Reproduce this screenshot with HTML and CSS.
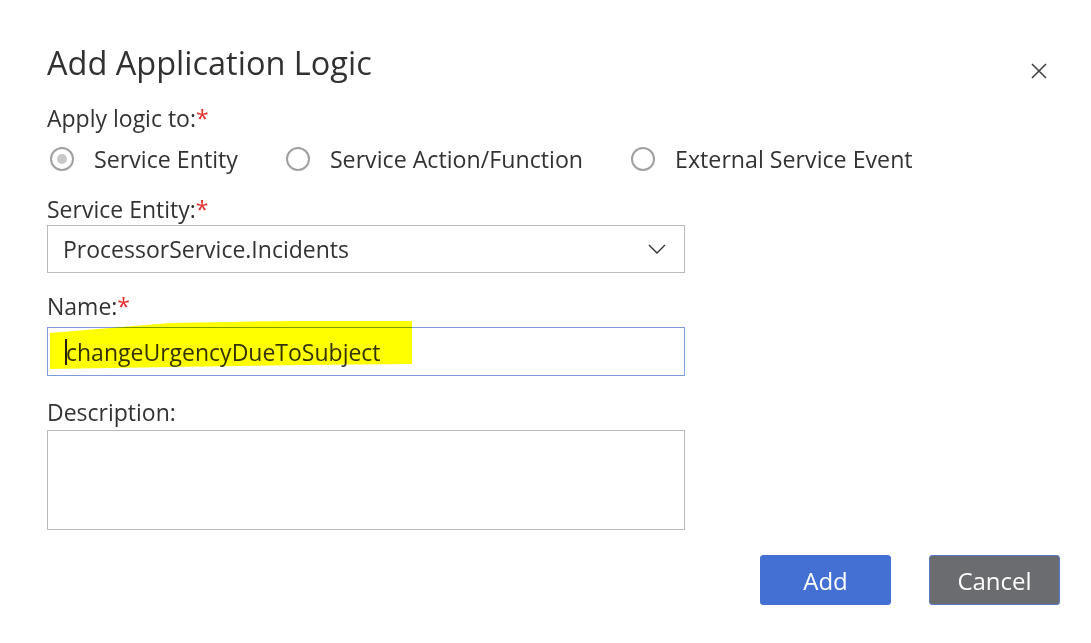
FILE: index.html
```html
<!DOCTYPE html>
<html>
<head>
<meta charset="utf-8">
<link rel="stylesheet" href="styles.css">
</head>
<body>
<div class="dialog">
  <div class="header">
    <h1 class="title">Add Application Logic</h1>
    <button class="close" aria-label="Close">
      <svg width="16" height="16" viewBox="0 0 16 16"><path d="M1 1 L15 15 M15 1 L1 15" stroke="#444" stroke-width="1.6" fill="none"/></svg>
    </button>
  </div>
  <div class="label l-apply">Apply logic to:<span class="req">*</span></div>
  <div class="radios">
    <label class="radio"><span class="circle checked"></span>Service Entity</label>
    <label class="radio"><span class="circle"></span>Service Action/Function</label>
    <label class="radio"><span class="circle"></span>External Service Event</label>
  </div>
  <div class="label l-entity">Service Entity:<span class="req">*</span></div>
  <div class="select">
    <span>ProcessorService.Incidents</span>
    <svg width="18" height="10" viewBox="0 0 18 10"><path d="M1 1 L9 9 L17 1" stroke="#333" stroke-width="1.4" fill="none"/></svg>
  </div>
  <div class="label l-name">Name:<span class="req">*</span></div>
  <div class="name-wrap">
    <div class="input name"><span class="caret"></span>changeUrgencyDueToSubject</div>
    <div class="highlight"></div>
  </div>
  <div class="label l-desc">Description:</div>
  <div class="textarea"></div>
  <div class="footer">
    <button class="btn add">Add</button>
    <button class="btn cancel">Cancel</button>
  </div>
</div>
</body>
</html>
```
FILE: styles.css
```css
html, body {
  margin: 0;
  padding: 0;
  background: #fff;
}
body {
  font-family: "Open Sans", "Noto Sans", sans-serif;
  color: #333;
}
.dialog {
  width: 1091px;
  height: 643px;
  padding: 39px 0 0 47px;
  box-sizing: border-box;
}
.header {
  display: flex;
  align-items: flex-start;
  width: 1001px;
}
.title {
  margin: 0;
  font-weight: 400;
  font-size: 32.5px;
  line-height: 48px;
  color: #323130;
  flex: 1;
}
.close {
  border: 0;
  background: none;
  padding: 0;
  margin-top: 23px;
  width: 18px;
  height: 18px;
  display: flex;
  align-items: center;
  justify-content: center;
}
.label {
  font-size: 23px;
  line-height: 28px;
  color: #333;
}
.req {
  color: #e52b2b;
}
.l-apply { margin-top: 17px; }
.radios {
  display: flex;
  gap: 48px;
  margin-top: 13px;
  padding-left: 3px;
}
.radio {
  display: flex;
  align-items: center;
  font-size: 23.2px;
  line-height: 28px;
  gap: 20px;
}
.circle {
  width: 24px;
  height: 24px;
  border: 2.5px solid #a0a0a0;
  border-radius: 50%;
  box-sizing: border-box;
  display: flex;
  align-items: center;
  justify-content: center;
}
.circle.checked::after {
  content: "";
  width: 10px;
  height: 10px;
  border-radius: 50%;
  background: #c8c8c8;
}
.l-entity { margin-top: 22px; }
.select, .input, .textarea {
  width: 638px;
  box-sizing: border-box;
  border: 1px solid #b8bbc0;
  background: #fff;
}
.select {
  height: 48px;
  margin-top: 2px;
  display: flex;
  align-items: center;
  justify-content: space-between;
  padding: 0 18px 0 15px;
  font-size: 23px;
}
.l-name { margin-top: 19px; }
.name-wrap {
  position: relative;
  margin-top: 7px;
  width: 638px;
}
.input.name {
  height: 49px;
  border: 1px solid #7d9ce0;
  display: flex;
  align-items: center;
  padding-left: 17px;
  font-size: 23px;
}
.caret {
  display: inline-block;
  width: 2px;
  height: 26px;
  background: #222;
  margin-right: -1px;
}
.highlight {
  position: absolute;
  left: 3px;
  top: -6px;
  width: 362px;
  height: 48px;
  background: #ffff00;
  mix-blend-mode: multiply;
  clip-path: polygon(0 12px, 120px 2px, 240px 0, 362px 0, 362px 43px, 250px 44px, 120px 46px, 0 48px);
}
.l-desc { margin-top: 22px; }
.textarea {
  height: 100px;
  margin-top: 4px;
}
.footer {
  display: flex;
  justify-content: flex-end;
  gap: 38px;
  width: 1013px;
  margin-top: 25px;
}
.btn {
  width: 131px;
  height: 50px;
  border-radius: 3px;
  font-family: "Open Sans", "Noto Sans", sans-serif;
  font-size: 24px;
  color: #fff;
  padding: 0;
}
.add {
  background: #4470d4;
  border: 1px solid #4470d4;
}
.cancel {
  background: #6b6c6f;
  border: 1px solid #5a7ac8;
}
```
